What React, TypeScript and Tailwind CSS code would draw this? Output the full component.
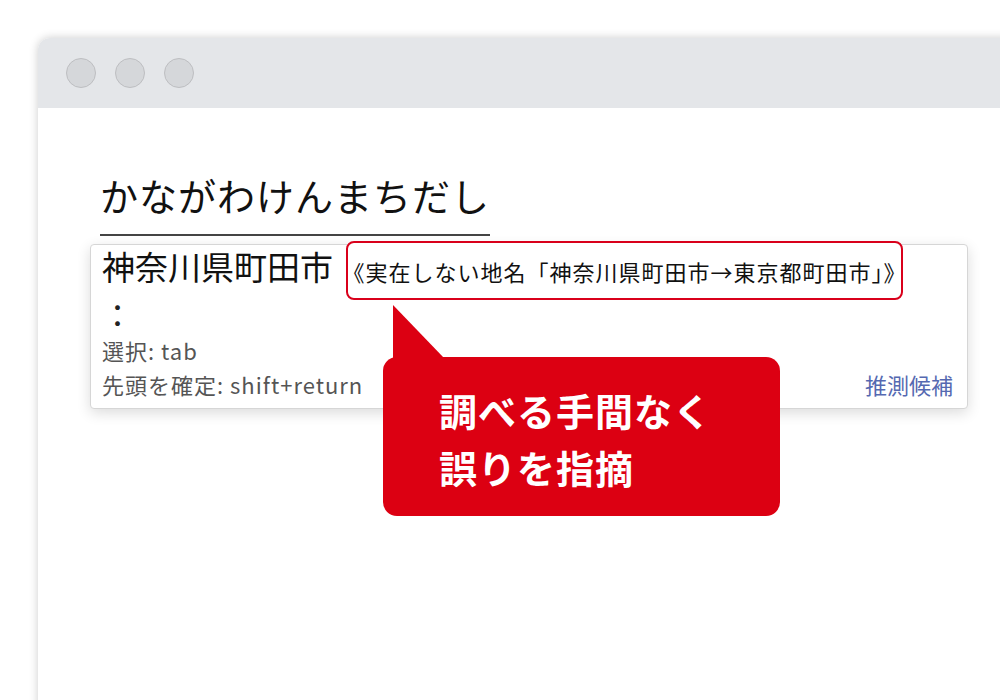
const jp = "font-['Noto_Sans_CJK_JP',sans-serif]";

function TitleBar() {
  return (
    <div className="h-[70px] bg-[#e4e6e9] rounded-tl-[12px] flex items-center gap-[19px] pl-[28px] flex-shrink-0">
      {[0, 1, 2].map((i) => (
        <span key={i} className="w-[30px] h-[30px] rounded-full bg-[#d5d7da] border border-[#bdbec1]" />
      ))}
    </div>
  );
}

function Dropdown() {
  return (
    <div className="w-[878px] h-[165px] bg-white border border-[#d6d6d6] rounded-[4px] shadow-[0_4px_14px_rgba(0,0,0,0.14)] pl-[11px] pr-[14px] flex flex-col">
      {/* first candidate + annotation */}
      <div className="flex items-start gap-[13px] -mt-[4px]">
        <span className="mt-[9px] text-[33px] leading-none text-[#111]">神奈川県町田市</span>
        <div className="w-[557px] h-[59px] border-2 border-[#d9001b] rounded-[8px] bg-white flex items-center justify-center">
          <span className="text-[22px] tracking-[1px] leading-none text-[#111] whitespace-nowrap">
            《実在しない地名「神奈川県町田市→東京都町田市」》
          </span>
        </div>
      </div>
      <span className="text-[31px] leading-none text-[#222] -mt-[2px]">：</span>
      <div className="mt-[4px] flex items-end justify-between text-[22px] leading-[34px]">
        <div className="flex flex-col text-[#555] tracking-[1px]">
          <span>選択: tab</span>
          <span>先頭を確定: shift+return</span>
        </div>
        <span className="text-[#5569b1]">推測候補</span>
      </div>
    </div>
  );
}

export default function App() {
  return (
    <div className={`relative w-[1000px] h-[700px] bg-white overflow-hidden pt-[38px] pl-[38px] ${jp}`}>
      <div className="h-[700px] w-[1000px] bg-white rounded-tl-[12px] shadow-[0_0_10px_rgba(0,0,0,0.2)] flex flex-col">
        <TitleBar />
        <div className="pl-[52px] pt-[68px] flex flex-col">
          {/* input */}
          <div className="ml-[10px] w-[390px] border-b-2 border-[#444] pb-[18px]">
            <span className="text-[38px] tracking-[1px] leading-none text-[#111] whitespace-nowrap">かながわけんまちだし</span>
          </div>
          <div className="mt-[8px]">
            <Dropdown />
          </div>
        </div>
      </div>

      {/* callout */}
      <svg className="absolute left-[393px] top-[305px]" width="51" height="53" viewBox="0 0 51 53">
        <polygon points="0,0 0,53 51,53" fill="#dc0012" />
      </svg>
      <div className="absolute left-[383px] top-[357px] w-[397px] h-[159px] rounded-[14px] bg-[#dc0012] pl-[56px] pt-[24px]">
        <p className="text-[38px] tracking-[1px] leading-[57px] font-bold text-white whitespace-nowrap">
          調べる手間なく
          <br />
          誤りを指摘
        </p>
      </div>
    </div>
  );
}
